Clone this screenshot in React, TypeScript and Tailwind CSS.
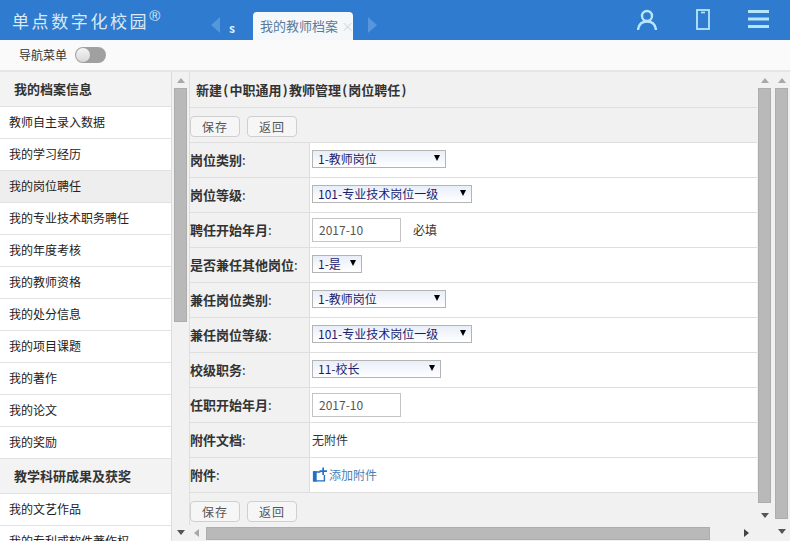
import React from 'react';

const font = { fontFamily: '"Noto Sans CJK SC", sans-serif' };

const sideItems1 = ['教师自主录入数据', '我的学习经历', '我的岗位聘任', '我的专业技术职务聘任', '我的年度考核', '我的教师资格', '我的处分信息', '我的项目课题', '我的著作', '我的论文', '我的奖励'];
const sideItems2 = ['我的文艺作品', '我的专利或软件著作权'];

const SideRow: React.FC<{ label: string; active?: boolean }> = ({ label, active }) => (
  <div className={`h-[32px] shrink-0 flex items-center pl-[9px] pb-[2px] border-b border-[#e2e2e2] text-[12px] text-[#222] whitespace-nowrap ${active ? 'bg-[#eeeeee]' : 'bg-white'}`}>
    {label}
  </div>
);

const SideHeader: React.FC<{ label: string }> = ({ label }) => (
  <div className="h-[35px] shrink-0 flex items-center pl-[14px] pb-[1px] bg-[#f3f3f3] border-b border-[#e2e2e2] text-[13px] font-bold text-[#333]">
    {label}
  </div>
);

const Up = () => <div className="w-0 h-0 border-x-[4px] border-x-transparent border-b-[5px] border-b-[#a8a8a8]" />;
const Down = () => <div className="w-0 h-0 border-x-[4px] border-x-transparent border-t-[5px] border-t-[#555]" />;

const VScroll: React.FC<{ thumb: string; gap: string; width: string }> = ({ thumb, gap, width }) => (
  <div className={`${width} shrink-0 h-full flex flex-col items-center bg-[#f1f1f1] pt-[6px]`}>
    <Up />
    <div className={`${thumb} w-[13px] mt-[5px] bg-[#b9b9b9] border border-[#adadad]`} />
    <div className={gap} />
    <Down />
  </div>
);

const Select: React.FC<{ value: string; w: string }> = ({ value, w }) => (
  <div className={`relative ${w} h-[18px] mb-[3px] border border-[#b4b4b4] bg-gradient-to-b from-[#e8eef8] to-white flex items-center pl-[5px] text-[12px] leading-none text-[#1c1c6e]`}>
    {value}
    <span className="absolute right-[5px] top-[4px] w-0 h-0 border-x-[3.5px] border-x-transparent border-t-[6px] border-t-black" />
  </div>
);

const Input = () => (
  <div className="w-[89px] h-[24px] border border-[#c4c4c4] bg-white flex items-center pl-[6px] text-[12px] text-[#555]">2017-10</div>
);

const Btn: React.FC<{ label: string }> = ({ label }) => (
  <button className="w-[50px] h-[21px] border border-[#cfcfcf] rounded-[4px] bg-[#f6f6f6] text-[12px] leading-none tracking-[1px] text-[#555]">{label}</button>
);

const Row: React.FC<{ label: string; children: React.ReactNode }> = ({ label, children }) => (
  <div className="h-[35px] flex border-b border-[#dedede]">
    <div className="w-[120px] shrink-0 flex items-center border-r border-[#dedede] text-[13px] font-bold text-[#333] whitespace-nowrap">
      {label}<span className="font-normal">:</span>
    </div>
    <div className="flex-1 bg-white flex items-center gap-[12px] pl-[2px] text-[12px] text-[#333]">{children}</div>
  </div>
);

const Paren: React.FC<{ c: string }> = ({ c }) => <span className="mx-[1.25px]">{c}</span>;

export default function App() {
  return (
    <div className="w-[790px] h-[541px] overflow-hidden bg-[#f1f1f1] flex flex-col" style={font}>
      <header className="h-[40px] shrink-0 bg-[#2e7bcf] flex relative">
        <div className="w-[205px] pl-[12px] pt-[9px] text-[17px] leading-[24px] tracking-[2.6px] text-[#dce9f6] whitespace-nowrap">
          单点数字化校园<sup className="font-['Liberation_Sans'] text-[15px] tracking-normal">®</sup>
        </div>
        <div className="flex items-end">
          <div className="mb-[7px] ml-[6px] w-0 h-0 border-y-[8px] border-y-transparent border-r-[9px] border-r-[#5596dc]" />
          <span className="ml-[9px] w-[24px] mb-[6px] text-[12px] leading-none font-bold text-[#e4eef8]">s</span>
          <div className="w-[100px] h-[28px] bg-[#f4f8fb] rounded-t-[4px] flex items-center pl-[7px] text-[13px] text-[#5a7a9a] whitespace-nowrap">
            我的教师档案<span className="ml-[3px] text-[13px] text-[#cfd8e0]">×</span>
          </div>
          <div className="mb-[7px] ml-[15px] w-0 h-0 border-y-[8px] border-y-transparent border-l-[9px] border-l-[#5596dc]" />
        </div>
        <div className="ml-auto flex items-center pr-[21px] pb-[2px] text-[#b5e6fb]">
          <svg width="20" height="21" viewBox="0 0 20 21" fill="none" stroke="currentColor" strokeWidth="2.4">
            <circle cx="10" cy="7" r="5" />
            <path d="M1 21c.6-5 3.800-8.500 9-8.500s8.400 3.500 9 8.500" />
          </svg>
          <svg className="ml-[39px]" width="14" height="21" viewBox="0 0 14 21" fill="none" stroke="currentColor" strokeWidth="1.800">
            <rect x="1" y="1" width="12" height="19" />
            <path d="M5 3.500h4" strokeWidth="1.600" />
          </svg>
          <svg className="ml-[38px]" width="21" height="18" viewBox="0 0 21 18" fill="currentColor">
            <rect y="0" width="21" height="3" />
            <rect y="7.500" width="21" height="3" />
            <rect y="15" width="21" height="3" />
          </svg>
        </div>
      </header>

      <div className="h-[30px] shrink-0 bg-[#f9faf9] flex items-center pl-[19px] pb-[1px] text-[12px] text-[#333] gap-[8px]">
        导航菜单
        <div className="w-[31px] h-[16px] rounded-full bg-[#a0a0a0] flex items-center pl-[1px]">
          <div className="w-[14px] h-[14px] rounded-full bg-gradient-to-b from-[#f5f5f5] to-[#d8d8d8]" />
        </div>
      </div>

      <div className="h-[471px] flex border-t-2 border-[#e6e6e6] overflow-hidden">
        <aside className="w-[172px] shrink-0 bg-white flex flex-col overflow-hidden border-r border-[#dcdcdc]">
          <SideHeader label="我的档案信息" />
          {sideItems1.map(s => <SideRow key={s} label={s} active={s === '我的岗位聘任'} />)}
          <SideHeader label="教学科研成果及获奖" />
          {sideItems2.map(s => <SideRow key={s} label={s} />)}
        </aside>

        <VScroll width="w-[17px]" thumb="h-[234px]" gap="h-[208px]" />

        <div className="w-[582px] shrink-0 flex flex-col">
          <div className="h-[453px] flex">
            <main className="w-[569px] shrink-0 pr-[1px] flex flex-col border-l border-[#dedede]">
              <div className="h-[36px] shrink-0 flex items-center pl-[6px] border-b border-[#dedede] text-[13px] font-bold text-[#333] whitespace-nowrap">
                新建<Paren c="(" />中职通用<Paren c=")" />教师管理<Paren c="(" />岗位聘任<Paren c=")" />
              </div>
              <div className="h-[35px] shrink-0 flex items-center gap-[7px] pt-[3px] border-b border-[#dedede]">
                <Btn label="保存" />
                <Btn label="返回" />
              </div>
              <Row label="岗位类别"><Select value="1-教师岗位" w="w-[134px]" /></Row>
              <Row label="岗位等级"><Select value="101-专业技术岗位一级" w="w-[160px]" /></Row>
              <Row label="聘任开始年月"><Input /><span>必填</span></Row>
              <Row label="是否兼任其他岗位"><Select value="1-是" w="w-[50px]" /></Row>
              <Row label="兼任岗位类别"><Select value="1-教师岗位" w="w-[134px]" /></Row>
              <Row label="兼任岗位等级"><Select value="101-专业技术岗位一级" w="w-[160px]" /></Row>
              <Row label="校级职务"><Select value="11-校长" w="w-[129px]" /></Row>
              <Row label="任职开始年月"><Input /></Row>
              <Row label="附件文档"><span>无附件</span></Row>
              <Row label="附件">
                <span className="flex items-center gap-[2px] text-[#4a7fb5]">
                  <svg width="15" height="16" viewBox="0 0 16 16" className="shrink-0">
                    <path d="M1 4h8v1.500H2.500v8h10V8H14v7H1z" fill="#1f72c4" />
                    <rect x="1" y="4" width="4" height="11" fill="#1f72c4" />
                    <path d="M11 0h1.800v3H16v1.800h-3.200V8H11V4.800H8V3h3z" fill="#1f72c4" />
                  </svg>
                  添加附件
                </span>
              </Row>
              <div className="pt-[8px] flex gap-[7px]">
                <Btn label="保存" />
                <Btn label="返回" />
              </div>
            </main>
            <VScroll width="w-[13px]" thumb="h-[415px]" gap="h-[10px]" />
          </div>
          <div className="flex-1 flex items-center">
            <div className="ml-[5px] w-0 h-0 border-y-[4px] border-y-transparent border-r-[5px] border-r-[#a8a8a8]" />
            <div className="ml-[7px] w-[504px] h-[13px] bg-[#b9b9b9] border border-[#adadad]" />
            <div className="ml-[34px] w-0 h-0 border-y-[4px] border-y-transparent border-l-[5px] border-l-[#444]" />
          </div>
        </div>

        <VScroll width="w-[19px] pl-[2px]" thumb="h-[431px]" gap="h-[10px]" />
      </div>
    </div>
  );
}
